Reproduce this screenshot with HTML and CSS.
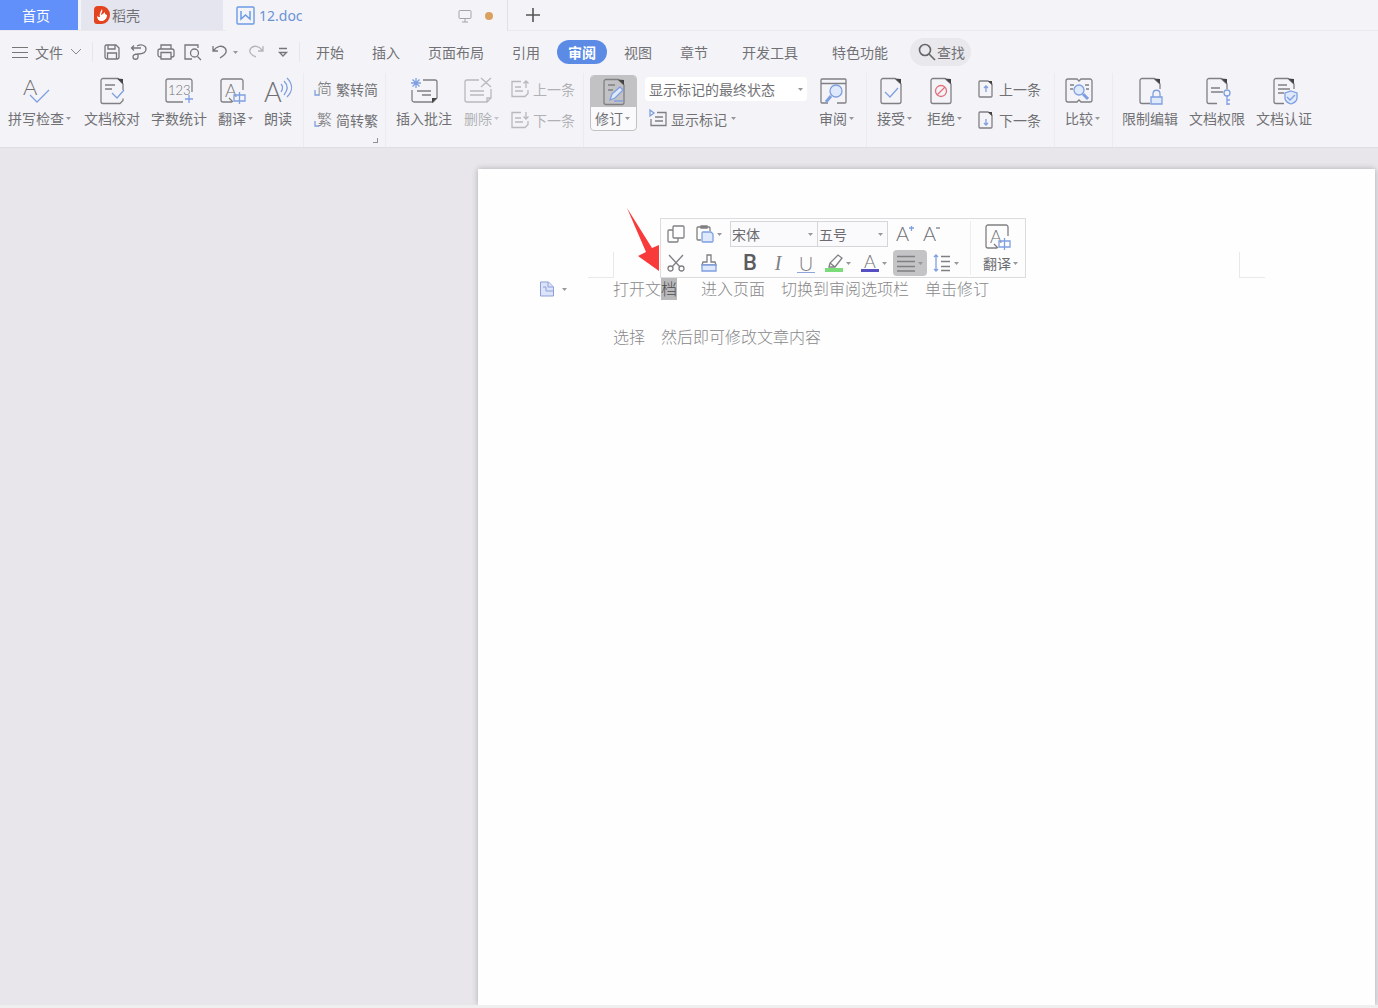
FILE: index.html
```html
<!DOCTYPE html>
<html lang="zh-CN">
<head>
<meta charset="utf-8">
<title>12.doc</title>
<link rel="stylesheet" href="styles.css">
</head>
<body>
<svg class="defs" aria-hidden="true">
  <symbol id="caret" viewBox="0 0 5 3"><path d="M0 0h5L2.500 3z" fill="currentColor"/></symbol>
  <symbol id="page" viewBox="0 0 28 28"><path d="M18 1.500H6a2 2 0 0 0-2 2v21a2 2 0 0 0 2 2h16a2 2 0 0 0 2-2V7z"/><path class="ink" d="M18 1.500 24 7V2z"/></symbol>
  <symbol id="cut-page" viewBox="0 0 28 28"><path d="M24 12V7l-6-5.500H6a2 2 0 0 0-2 2v21a2 2 0 0 0 2 2h8"/><path class="ink" d="M18 1.500 24 7V2z"/></symbol>
  <symbol id="translate" viewBox="-1 0 28 28"><path d="M24 13V4a2 2 0 0 0-2-2H4a2 2 0 0 0-2 2v19a2 2 0 0 0 2 2h9M10 21l4 4"/><text x="6" y="20" font-size="18">A</text><path class="blue" d="M15 18h11v6H15zM20.500 15v12"/></symbol>
</svg>

<header class="tabs">
  <button class="tab home">首页</button>
  <button class="tab store">
    <svg width="16" height="18" viewBox="0 0 16 18"><path d="M4 0h4a8 9 0 0 1 0 18H3a3 3 0 0 1-3-3V4a4 4 0 0 1 4-4z" fill="#e4431f"/><path d="M8 3c1 3-1 4-1 6 2-1 3-2 4-3 0 2 0 2 2 3 0 4-3 6-6 6-2 0-4-2-4-5 1 1 2 1 3 1-1-3 1-6 2-8z" fill="#fff"/></svg>
    稻壳
  </button>
  <button class="tab document">
    <svg width="19" height="19" viewBox="0 0 19 19" fill="none" stroke="#6b9be4"><rect x="1" y="1" width="17" height="17" rx="1" stroke-width="1.400"/><path d="M5 5v8l4.500-4 4.500 4V5" stroke-width="1.500"/></svg>
    <span class="filename">12.doc</span>
    <svg width="14" height="14" viewBox="0 0 14 14" fill="none" stroke="#a5a5a9"><path d="M2 1.500h10a1 1 0 0 1 1 1v6a1 1 0 0 1-1 1H2a1 1 0 0 1-1-1v-6a1 1 0 0 1 1-1zM7 9.500V13M4 13h6"/></svg>
    <i class="unsaved"></i>
  </button>
  <button class="add" aria-label="新建"><svg width="14" height="14" viewBox="0 0 14 14" stroke="#555" stroke-width="1.600"><path d="M7 0v14M0 7h14"/></svg></button>
</header>

<nav class="menu">
  <button class="file">
    <svg width="16" height="13" viewBox="0 0 16 13" stroke="#777"><path d="M0 1.500h16M0 6.500h16M0 11.500h16"/></svg>
    文件
    <svg width="12" height="8" viewBox="0 0 12 8" fill="none" stroke="#888"><path d="m1 1 5 5 5-5"/></svg>
  </button>
  <div class="quick">
    <button aria-label="保存"><svg viewBox="0 0 18 18"><path d="M3 2h10l3 3v9a2 2 0 0 1-2 2H4a2 2 0 0 1-2-2V3zM5 2v4h7V2M4.500 16v-6h9v6"/></svg></button>
    <button aria-label="输出"><svg viewBox="0 0 18 18"><path d="M2 5h9M4 2.500 1.500 5 4 7.500M7 3c4-2 9-1 9 3s-4 5-8 5v3c0 3-5 3-5 0s3-3 5-3"/></svg></button>
    <button aria-label="打印"><svg viewBox="0 0 18 18"><path d="M4 6V2h10v4M4 14H3a2 2 0 0 1-2-2V8a2 2 0 0 1 2-2h12a2 2 0 0 1 2 2v4a2 2 0 0 1-2 2h-1M4 9.500h10V16H4z"/></svg></button>
    <button aria-label="打印预览"><svg viewBox="0 0 18 18"><path d="M14 5V2H1v14h7M13.500 13.500 17 17"/><circle cx="10.500" cy="10" r="4"/></svg></button>
    <button class="undo" aria-label="撤销"><svg viewBox="0 0 18 18"><path d="M2 3v5h5M2.500 7.500C6 3 11 2 14 5c3 4 0 7-5 10"/></svg><svg class="caret"><use href="#caret"/></svg></button>
    <button class="off" aria-label="恢复"><svg viewBox="0 0 18 18"><path d="M16 3v5h-5M15.500 7.500C12 3 7 2 4 5c-3 4 0 7 5 9"/></svg></button>
    <button aria-label="更多"><svg viewBox="0 0 18 18"><path d="M5 5.500h8M5.500 9.500h7L9 13z"/></svg></button>
  </div>
  <div class="pages">
    <button>开始</button><button>插入</button><button>页面布局</button><button>引用</button><button class="active">审阅</button><button>视图</button><button>章节</button>
    <button class="apart">开发工具</button><button class="apart">特色功能</button>
  </div>
  <button class="find"><svg width="18" height="18" viewBox="0 0 18 18" fill="none" stroke="#666" stroke-width="1.600"><circle cx="7" cy="7" r="5.500"/><path d="m11 11 6 6"/></svg>查找</button>
</nav>

<section class="ribbon">
  <div class="group g-proof">
    <button class="big"><svg viewBox="0 0 28 28"><text x="1" y="18" font-size="22">A</text><path class="blue" d="m8 18 7 7L27 13"/></svg><span>拼写检查</span><svg class="caret"><use href="#caret"/></svg></button>
    <button class="big"><svg viewBox="0 0 28 28"><path d="M25 13V7l-5-5.500H5a2 2 0 0 0-2 2v21a2 2 0 0 0 2 2h17l3-3v-2M7 8h10M7 12h7"/><path class="ink" d="M19 1.500 25 7V2z"/><path class="blue" d="m14 16 5 5 7-8"/></svg><span>文档校对</span></button>
    <button class="big"><svg viewBox="0 0 28 28"><path d="M27 15V4a2 2 0 0 0-2-2H3a2 2 0 0 0-2 2v19a2 2 0 0 0 2 2h15"/><text x="3" y="18" font-size="13">123</text><path class="blue" d="M20 22h8M24 18v8"/></svg><span>字数统计</span></button>
    <button class="big"><svg><use href="#translate"/></svg><span>翻译</span><svg class="caret"><use href="#caret"/></svg></button>
    <button class="big"><svg viewBox="0 0 28 28"><text x="0" y="25" font-size="27">A</text><path class="blue" d="M17 7c2 2 2 5 0 8M20 4c4 4 4 9 0 14M23 1c6 6 6 13 0 19"/></svg><span>朗读</span></button>
  </div>
  <div class="group g-convert">
    <div class="stack">
      <button class="small"><svg viewBox="0 0 18 18"><text x="3" y="14" font-size="15">简</text><path class="blue" d="M1 10v5h4"/></svg>繁转简</button>
      <button class="small"><svg viewBox="0 0 18 18"><text x="3" y="14" font-size="15">繁</text><path class="blue" d="M1 10v5h4"/></svg>简转繁</button>
    </div>
    <button class="launcher" aria-label="更多设置"></button>
  </div>
  <div class="group g-comment">
    <button class="big"><svg viewBox="0 0 28 28"><path d="M13 3h12a2 2 0 0 1 2 2v16l-4 4H4a2 2 0 0 1-2-2V13M7 14h14M12 18h9"/><path class="ink" d="M22 26v-5h5z"/><path class="blue" d="M6 1v10M1 6h10M2.500 2.500l7 7M9.500 2.500l-7 7"/></svg><span>插入批注</span></button>
    <button class="big off"><svg viewBox="0 0 28 28"><path d="M15 3H3a2 2 0 0 0-2 2v18a2 2 0 0 0 2 2h20l4-4V12M6 14h14M6 18h14M17 1l10 9M27 1l-10 9M23 25v-4h4"/></svg><span>删除</span><svg class="caret"><use href="#caret"/></svg></button>
    <div class="stack off">
      <button class="small"><svg viewBox="0 0 18 18"><path d="M10 1.500H1v15h13l3-3V10M4 7h6M4 11h8M15 8V1M12.500 3.500 15 1l2.500 2.500"/></svg>上一条</button>
      <button class="small"><svg viewBox="0 0 18 18"><path d="M10 1.500H1v15h13l3-3V10M4 7h6M4 11h8M15 1v7M12.500 5.500 15 8l2.500-2.500"/></svg>下一条</button>
    </div>
  </div>
  <div class="group g-track">
    <button class="track">
      <span class="track-icon"><svg viewBox="0 0 28 28"><use href="#page"/><path d="M8 7h7M8 12h5"/><path d="m10 22 2-6 8-7 3 3-8 8z" class="blue pale"/><path class="blue" d="M14 23h9"/></svg></span>
      <span class="track-label">修订<svg class="caret"><use href="#caret"/></svg></span>
    </button>
    <div class="markup">
      <div class="combo"><select aria-label="标记状态"><option>显示标记的最终状态</option></select><svg class="caret"><use href="#caret"/></svg></div>
      <button class="small"><svg viewBox="0 0 18 18"><path d="M8 2.500h9v13H2V9M6 7h8M6 11h8"/><path class="blue" d="M1 6V0l4 3z"/></svg>显示标记<svg class="caret"><use href="#caret"/></svg></button>
    </div>
    <button class="big"><svg viewBox="0 0 28 28"><path d="M9 26H3a1 1 0 0 1-1-1V3a1 1 0 0 1 1-1h23a1 1 0 0 1 1 1v22a1 1 0 0 1-1 1h-8M2 6.500h25"/><circle class="blue pale" cx="17" cy="14" r="6"/><path class="blue thick" d="m12 19-5 6"/></svg><span>审阅</span><svg class="caret"><use href="#caret"/></svg></button>
  </div>
  <div class="group g-change">
    <button class="big"><svg viewBox="0 0 28 28"><use href="#page"/><path class="blue" d="m8 15 5 5 8-9"/></svg><span>接受</span><svg class="caret"><use href="#caret"/></svg></button>
    <button class="big"><svg viewBox="0 0 28 28"><use href="#page"/><g class="red"><circle cx="14" cy="14" r="5.500"/><path d="m10 18 8-8"/></g></svg><span>拒绝</span><svg class="caret"><use href="#caret"/></svg></button>
    <div class="stack">
      <button class="small"><svg viewBox="0 0 18 18"><path d="M11 1H3a1 1 0 0 0-1 1v14a1 1 0 0 0 1 1h11a1 1 0 0 0 1-1V4z"/><path class="ink" d="m11 1 4 4V1z"/><path class="blue" d="M9 12V6M7 8l2-2 2 2"/></svg>上一条</button>
      <button class="small"><svg viewBox="0 0 18 18"><path d="M11 1H3a1 1 0 0 0-1 1v14a1 1 0 0 0 1 1h11a1 1 0 0 0 1-1V4z"/><path class="ink" d="m11 1 4 4V1z"/><path class="blue" d="M9 8v6M7 12l2 2 2-2"/></svg>下一条</button>
    </div>
  </div>
  <div class="group g-compare">
    <button class="big"><svg viewBox="0 0 28 28"><path d="M12 2H3a2 2 0 0 0-2 2v19a2 2 0 0 0 2 2h9l2-2 2 2h9a2 2 0 0 0 2-2V4a2 2 0 0 0-2-2h-9l-2 2zM5 8h4M5 12h3M20 8h4M21 12h3"/><circle class="blue pale" cx="14" cy="13" r="5"/><path class="blue thick" d="m18 17 5 5"/></svg><span>比较</span><svg class="caret"><use href="#caret"/></svg></button>
  </div>
  <div class="group g-protect">
    <button class="big"><svg viewBox="0 0 28 28"><use href="#cut-page"/><path class="blue" d="M17 20v-3c0-5 7-5 7 0v3"/><path class="blue pale" d="M15 20h11v7H15z"/></svg><span>限制编辑</span></button>
    <button class="big"><svg viewBox="0 0 28 28"><use href="#cut-page"/><path d="M8 11h9M8 15h12"/><circle class="blue" cx="24" cy="16" r="3"/><path class="blue" d="M24 19v9M24 23h3M24 27h3"/></svg><span>文档权限</span></button>
    <button class="big"><svg viewBox="0 0 28 28"><use href="#cut-page"/><path d="M8 8h9M8 12h12M8 16h6"/><path class="blue pale" d="m21 14 6 2v5c0 3-3 5-6 6-3-1-6-3-6-6v-5z"/><path class="blue" d="m17 20 3 3 5-5"/></svg><span>文档认证</span></button>
  </div>
</section>

<main class="canvas">
  <article class="sheet">
    <p>打开文<mark>档</mark><span class="after-mark">　进入页面　切换到审阅选项栏　单击修订</span></p>
    <p>&nbsp;</p>
    <p>选择　然后即可修改文章内容</p>

    <i class="crop crop-left"></i>
    <i class="crop crop-right"></i>
    <button class="para-tool" aria-label="段落布局"><svg width="16" height="16" viewBox="0 0 16 16" fill="#dde4fa" stroke="#8b9fd8"><path d="M1.500 1h8l5 5v9h-13z"/><path d="M9 1v5h5M4 6h3v4h7"/></svg><svg class="caret"><use href="#caret"/></svg></button>

    <div class="float">
      <div class="float-rows">
        <div class="frow">
          <button class="copy" aria-label="复制"><svg viewBox="0 0 18 18"><path d="M7 1h9a1 1 0 0 1 1 1v10a1 1 0 0 1-1 1H7a1 1 0 0 1-1-1V2a1 1 0 0 1 1-1zM6 5H2a1 1 0 0 0-1 1v10a1 1 0 0 0 1 1h8a1 1 0 0 0 1-1v-3"/></svg></button>
          <button class="paste" aria-label="粘贴"><svg viewBox="0 0 18 18"><path d="M5 15H2a1 1 0 0 1-1-1V3a1 1 0 0 1 1-1h11a1 1 0 0 1 1 1v3M5 3V1h6v2z"/><path class="blue pale" d="M7 7h8l2 2v7a1 1 0 0 1-1 1H7a1 1 0 0 1-1-1V8a1 1 0 0 1 1-1z"/></svg><svg class="caret"><use href="#caret"/></svg></button>
          <div class="fselect font-name"><select aria-label="字体"><option>宋体</option></select><svg class="caret"><use href="#caret"/></svg></div>
          <div class="fselect font-size"><select aria-label="字号"><option>五号</option></select><svg class="caret"><use href="#caret"/></svg></div>
          <button class="grow" aria-label="增大字号"><svg viewBox="0 0 18 18"><text x="0" y="16" font-size="20">A</text><path class="blue" d="M13 3h5M15.500 1v5"/></svg></button>
          <button class="shrink" aria-label="减小字号"><svg viewBox="0 0 18 18"><text x="0" y="16" font-size="20">A</text><path d="M13 3h4"/></svg></button>
        </div>
        <div class="frow second">
          <button aria-label="剪切"><svg viewBox="0 0 18 18"><path d="m2 1 11 12M16 1 5 13"/><circle cx="3.500" cy="14.500" r="2.500"/><circle cx="14.500" cy="14.500" r="2.500"/></svg></button>
          <button class="brush" aria-label="格式刷"><svg viewBox="0 0 18 18"><path d="M7 8V1h4v7h4l1 3H2l1-3z"/><path class="blue pale" d="M2 11h14v6H2z"/></svg></button>
          <button class="letter bold" aria-label="加粗">B</button>
          <button class="letter italic" aria-label="倾斜">I</button>
          <button class="letter under" aria-label="下划线">U</button>
          <button aria-label="突出显示"><svg viewBox="0 0 18 18"><path d="m4 13 1-4 8-8 4 3-7 9zM5 9l5 4"/><path d="M0 14h18v4H0z" fill="#7bdc79" stroke="none"/></svg><svg class="caret"><use href="#caret"/></svg></button>
          <button aria-label="字体颜色"><svg viewBox="0 0 18 18"><text x="3" y="14" font-size="18">A</text><path d="M0 15h18v3H0z" fill="#5650c2" stroke="none"/></svg><svg class="caret"><use href="#caret"/></svg></button>
          <button class="align" aria-label="对齐"><svg viewBox="0 0 18 18"><path d="M0 2.500h18M0 7.500h18M0 12.500h18M0 17h18"/></svg><svg class="caret"><use href="#caret"/></svg></button>
          <button aria-label="行距"><svg viewBox="0 0 18 18"><path d="M8 2.500h9M8 7.500h9M8 12.500h9M8 16.500h9"/><path class="blue" d="M3 1v16M1 3l2-2 2 2M1 15l2 2 2-2"/></svg><svg class="caret"><use href="#caret"/></svg></button>
        </div>
      </div>
      <button class="big float-translate"><svg><use href="#translate"/></svg><span>翻译</span><svg class="caret"><use href="#caret"/></svg></button>
    </div>

    <svg class="arrow" width="34" height="64" viewBox="0 0 34 64"><path d="M1 0 26 40l7-3v26L12 48l8-4z" fill="#f93a3a"/></svg>
  </article>
</main>
</body>
</html>
```
FILE: styles.css
```css
* { box-sizing: border-box; }

body {
  margin: 0;
  min-height: 100vh;
  display: flex;
  flex-direction: column;
  background: #f4f4f8;
  color: #717175;
  font: 14px/20px "Noto Sans CJK SC", sans-serif;
}

button, select {
  margin: 0;
  padding: 0;
  border: 0;
  background: none;
  color: inherit;
  font: inherit;
  white-space: nowrap;
}

svg { flex: none; overflow: visible; }
.defs { display: none; }
.caret { width: 5px; height: 3px; color: #98989c; }

/* Document tabs */
.tabs { display: flex; height: 31px; border-bottom: 1px solid #e9e9ee; }
.tab { display: flex; align-items: center; }
.home { width: 78px; justify-content: center; padding-right: 6px; background: #6190fb; color: #fff; }
.store { width: 142px; gap: 2px; margin: 0 3px; padding-left: 13px; background: #e4e5ef; }
.document { width: 282px; height: 31px; padding: 0 14px 0 10px; background: #f4f4f8; border-right: 1px solid #e0e0e5; }
.filename { flex: 1; padding-left: 4px; text-align: left; color: #6b93d6; font: 14px/20px "Noto Sans", sans-serif; }
.unsaved { width: 8px; height: 8px; margin-left: 13px; border-radius: 50%; background: #dba05f; }
.add { width: 50px; display: grid; place-items: center; }

/* Menu row */
.menu { display: flex; align-items: center; height: 42px; padding-left: 12px; }
.file { display: flex; align-items: center; gap: 7px; padding-right: 10px; border-right: 1px solid #e6e6eb; }
.quick { display: flex; align-items: center; gap: 9px; padding: 0 7px 0 10px; border-right: 1px solid #e6e6eb; }
.quick button { display: flex; align-items: center; height: 20px; }
.quick svg:first-child { width: 18px; height: 18px; fill: none; stroke: #77777b; stroke-width: 1.300; }
.undo { gap: 4px; }
.off { opacity: .5; }
.pages { display: flex; gap: 28px; padding-left: 16px; }
.pages .active { height: 24px; margin: -2px -11px; padding: 0 11px; border-radius: 12px; background: #5c8be6; color: #fff; font-weight: 700; }
.pages .apart { margin-left: 6px; }
.find { display: flex; align-items: center; gap: 1px; height: 28px; margin-left: 22px; padding: 0 6px 0 8px; border-radius: 14px; background: #e8e8ed; }

/* Ribbon */
.ribbon { display: flex; height: 75px; border-bottom: 1px solid #dedde1; }
.group { display: flex; gap: 12px; padding: 2px 8px 0 10px; border-right: 1px solid #ebebf0; }
.group:last-child { border-right: 0; }
.g-proof { gap: 11px; padding: 2px 11px 0 8px; }
.g-proof .big:first-child { margin-right: 2px; }
.g-convert { padding-right: 7px; flex-direction: column; gap: 0; }
.g-track { padding: 2px 12px 0 6px; }
.g-change { gap: 15px; padding-right: 13px; }
.g-compare { padding-right: 12px; }
.g-protect { gap: 11px; padding-left: 9px; }

.big {
  display: grid;
  grid-template-columns: auto auto;
  grid-template-rows: 28px 20px;
  row-gap: 3px;
  align-content: start;
  align-items: center;
  justify-items: center;
  padding-top: 2px;
}
.big svg:first-child { grid-column: 1; width: 28px; height: 28px; }
.big span { grid-column: 1; grid-row: 2; }
.big .caret { grid-column: 2; grid-row: 2; margin-left: 2px; }

.big svg:first-child, .small svg:first-child, .track-icon svg, .frow button svg:first-child {
  fill: none;
  stroke: #808084;
  stroke-width: 1.300;
}
svg text { fill: #707074; stroke: none; font-family: Lato, "Noto Sans CJK SC", sans-serif; font-weight: 300; }
svg .blue { stroke: #7f9fe0; }
svg .pale { fill: #dfe9fc; }
svg .thick { stroke-width: 3; }
svg .red { stroke: #e2707b; }
svg .ink { fill: #444; stroke: none; }

.stack { display: flex; flex-direction: column; gap: 10px; padding-top: 3px; }
.small { display: flex; align-items: center; gap: 4px; height: 21px; }
.small svg:first-child { width: 18px; height: 18px; }
.launcher { align-self: flex-end; width: 5px; height: 5px; margin-top: 8px; border: solid #909094; border-width: 0 1px 1px 0; }

.track { display: flex; flex-direction: column; width: 47px; height: 56px; border: 1px solid #c2c2c5; border-radius: 4px; overflow: hidden; background: #fafafc; }
.track-icon { display: grid; place-items: center; width: 100%; height: 31px; background: #c2c2c5; }
.track-icon svg { width: 28px; height: 28px; }
.track-label { display: flex; align-items: center; gap: 2px; padding: 1px 0 0 4px; }
.markup { display: flex; flex-direction: column; gap: 7px; width: 162px; margin: 2px 0 0 -4px; }
.markup .small { padding-left: 4px; }
.combo { display: flex; align-items: center; height: 24px; padding: 0 4px; border-radius: 4px; background: #fff; }
.combo select, .fselect select { flex: 1; min-width: 0; height: 100%; appearance: none; }

/* Document area */
.canvas { flex: 1; display: flex; padding: 21px 3px 0 478px; background: #e8e6ea; border-bottom: 3px solid #efefef; }
.sheet { position: relative; flex: 1; padding: 107px 135px 0; background: #fefefe; box-shadow: 0 0 6px #acabb0; clip-path: inset(-6px -6px 0 -6px); color: #88888a; font-size: 16px; line-height: 24px; font-weight: 300; }
.sheet p { margin: 0; white-space: nowrap; }
.sheet mark { background: #b9b9bb; color: #4c4c4e; }
.after-mark { margin-left: 8px; }

.crop { position: absolute; top: 83px; width: 26px; height: 26px; border: 0 solid #e9e9eb; border-bottom-width: 1px; }
.crop-left { left: 110px; border-right-width: 1px; }
.crop-right { right: 110px; border-left-width: 1px; }
.para-tool { position: absolute; left: 61px; top: 112px; display: flex; align-items: center; gap: 7px; }
.arrow { position: absolute; left: 148px; top: 39px; }

/* Floating format bar */
.float { position: absolute; left: 182px; top: 49px; display: flex; width: 366px; height: 60px; border: 1px solid #dcdcde; background: #fdfdfe; color: #6c6c70; font-size: 14px; line-height: 20px; font-weight: 400; }
.float-rows { width: 310px; margin: 2px 0; padding-left: 6px; border-right: 1px solid #eeeef1; }
.frow { display: flex; align-items: center; height: 26px; }
.frow button { display: flex; align-items: center; gap: 3px; height: 18px; }
.frow button svg:first-child { width: 18px; height: 18px; }
.copy { margin-right: 11px; }
.paste { margin-right: 8px; }
.fselect { display: flex; align-items: center; height: 26px; padding: 0 4px 0 1px; border: 1px solid #d6d6d9; background: #fafafc; }
.font-name { width: 88px; }
.font-size { width: 71px; margin-left: -1px; }
.grow { margin: 0 9px 0 8px; }
.second { gap: 10px; height: 32px; }
.second .brush { margin: 0 13px 0 5px; }
.frow .letter { justify-content: center; width: 18px; font: 20px/18px "Noto Sans", sans-serif; }
.frow .bold { color: #5c5c60; font-family: Roboto, sans-serif; font-weight: 500; font-size: 22px; }
.frow .italic { color: #808084; font-family: "Liberation Serif", serif; font-style: italic; }
.frow .under { height: 19px; color: #808084; font-family: Lato, sans-serif; font-weight: 300; border-bottom: 1px solid #8fa4dc; }
.frow .align { height: 26px; margin: 0 -4px; padding: 0 4px; border-radius: 4px; background: #c4c4c7; }
.float-translate { padding: 4px 0 0 12px; row-gap: 2px; }
```
